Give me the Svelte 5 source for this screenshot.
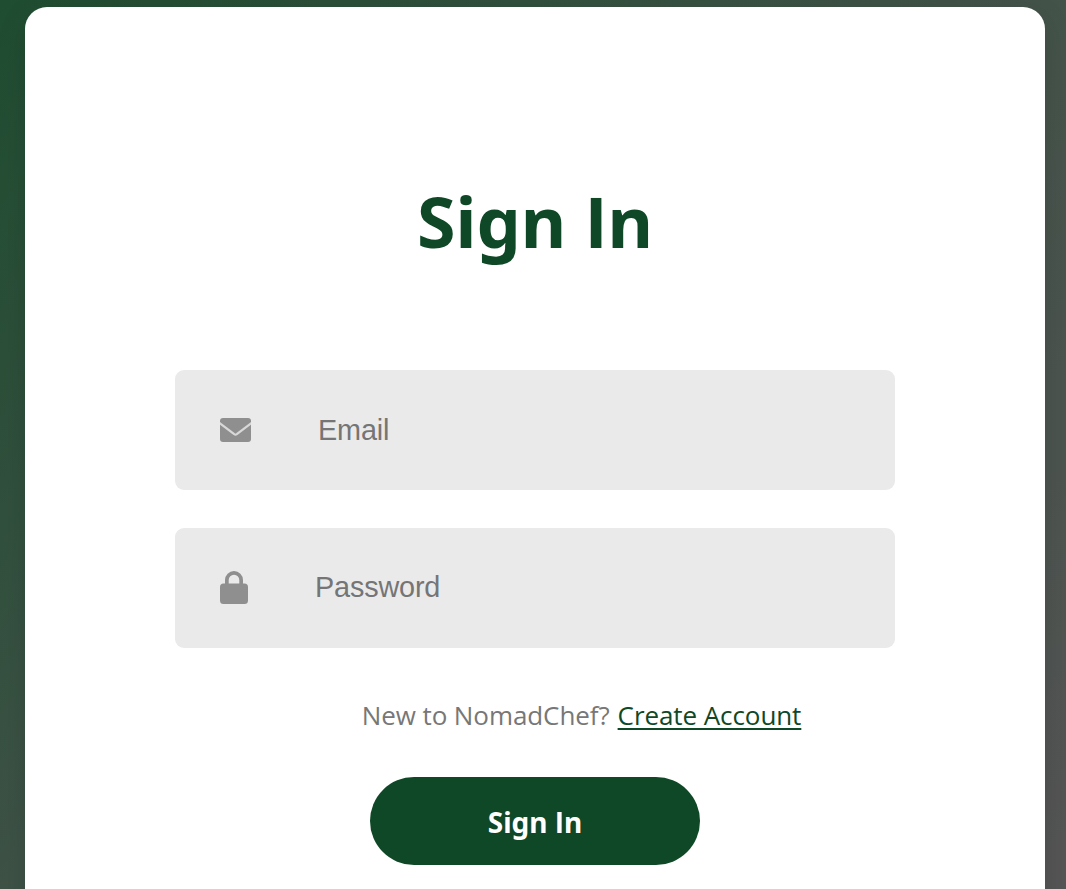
<script>
  let email = $state('');
  let password = $state('');
</script>

<main class="page">
  <form class="card" onsubmit={(e) => e.preventDefault()}>
    <h1>Sign <span class="cap">I</span>n</h1>

    <label class="field">
      <svg class="mail" viewBox="0 0 31 24" aria-hidden="true">
        <rect width="31" height="24" rx="3" />
        <path class="fold" d="M-1 4.6L14.2 16.1Q15.5 17 16.8 16.1L32 4.6" />
      </svg>
      <input type="email" placeholder="Email" bind:value={email} />
    </label>

    <label class="field secret">
      <svg class="lock" viewBox="0 0 28 33" aria-hidden="true">
        <path d="M5 12.5V9A9 9 0 0 1 23 9V12.5H24.5Q28 12.5 28 16V29.5Q28 33 24.5 33H3.5Q0 33 0 29.5V16Q0 12.5 3.5 12.5ZM8.7 12.5H19.3V9A5.3 5.3 0 0 0 8.7 9Z" />
      </svg>
      <input type="password" placeholder="Password" bind:value={password} />
    </label>

    <p class="signup"><span class="prompt">New to NomadChef?</span><a href="#signup">Create Account</a></p>

    <button type="submit">Sign <span class="cap">I</span>n</button>
  </form>
</main>

<style>
  :global(body) {
    overflow: hidden;
  }
  .page {
    box-sizing: border-box;
    height: 889px;
    padding: 7px 21px 0 25px;
    overflow: hidden;
    background: linear-gradient(135deg, #1f4d31 0%, #44534a 54%, #555 100%);
    font-family: 'Segoe UI', 'Noto Sans', sans-serif;
  }
  .card {
    box-sizing: border-box;
    height: 1000px;
    padding: 164px 150px 0;
    border-radius: 22px;
    background: #fff;
    box-shadow: 0 8px 30px rgba(0, 0, 0, 0.12);
    display: flex;
    flex-direction: column;
    align-items: center;
  }
  h1 {
    margin: 0 0 99px;
    height: 100px;
    line-height: 100px;
    font-size: 70px;
    font-weight: 700;
    letter-spacing: 0;
    color: #0f4826;
    white-space: nowrap;
  }
  .cap {
    font-family: 'Segoe UI', 'Open Sans', sans-serif;
  }
  .field {
    box-sizing: border-box;
    width: 720px;
    height: 120px;
    flex: none;
    margin-bottom: 38px;
    padding-left: 45px;
    border-radius: 9px;
    background: #eaeaea;
    display: flex;
    align-items: center;
    gap: 67px;
  }
  .secret {
    padding-bottom: 2px;
  }
  .field svg {
    flex: none;
    fill: #8f8f8f;
  }
  .mail {
    width: 31px;
    height: 24px;
  }
  .field .fold {
    fill: none;
    stroke: #d8d8d8;
    stroke-width: 2.3;
  }
  .lock {
    width: 28px;
    height: 33px;
  }
  input {
    flex: 1;
    min-width: 0;
    padding: 0;
    border: 0;
    outline: 0;
    background: transparent;
    font: 28.8px Arial, 'Liberation Sans', sans-serif;
    letter-spacing: -0.15px;
    color: #333;
  }
  input::placeholder {
    color: #757575;
    opacity: 1;
  }
  .signup {
    margin: 9px 0 0 93px;
    height: 40px;
    line-height: 40px;
    font-family: 'Segoe UI', 'Open Sans', sans-serif;
    font-size: 26px;
    letter-spacing: -0.08px;
    color: #777;
    white-space: nowrap;
    display: flex;
    gap: 8px;
  }
  a {
    color: #0f4826;
    text-decoration-thickness: 2px;
    text-underline-offset: 3px;
  }
  button {
    flex: none;
    width: 330px;
    height: 88px;
    margin-top: 42px;
    padding: 2px 0 0;
    border: 0;
    border-radius: 44px;
    background: #0f4826;
    color: #fff;
    font: 700 28px/40px 'Segoe UI', 'Noto Sans', sans-serif;
    letter-spacing: 0;
  }
</style>
